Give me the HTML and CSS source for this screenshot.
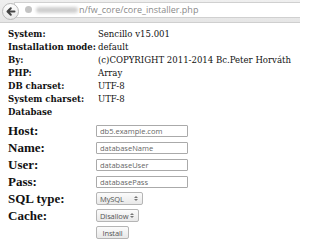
FILE: index.html
```html
<!DOCTYPE html>
<html>
<head>
<meta charset="utf-8">
<link rel="stylesheet" href="styles.css">
</head>
<body>
<div class="toolbar">
  <div class="back">
    <svg width="11" height="11" viewBox="0 0 11 11"><path d="M9.5 5.5H3M5.8 2.2L2.5 5.5l3.3 3.3" fill="none" stroke="#444" stroke-width="2" stroke-linecap="round" stroke-linejoin="round"/></svg>
  </div>
  <div class="urlbar">
    <span class="globe"></span>
    <span class="blur"></span>
    <span class="url">n/fw_core/core_installer.php</span>
  </div>
</div>
<div class="page">
  <table class="info">
    <tr><th>System:</th><td>Sencillo v15.001</td></tr>
    <tr><th>Installation mode:</th><td>default</td></tr>
    <tr><th>By:</th><td>(c)COPYRIGHT 2011-2014 Bc.Peter Horváth</td></tr>
    <tr><th>PHP:</th><td>Array</td></tr>
    <tr><th>DB charset:</th><td>UTF-8</td></tr>
    <tr><th>System charset:</th><td>UTF-8</td></tr>
    <tr><th>Database</th><td></td></tr>
  </table>
  <form class="db">
    <div class="row"><label>Host:</label><input class="field" value="db5.example.com"></div>
    <div class="row"><label>Name:</label><input class="field" value="databaseName"></div>
    <div class="row"><label>User:</label><input class="field" value="databaseUser"></div>
    <div class="row"><label>Pass:</label><input class="field" value="databasePass"></div>
    <div class="row"><label>SQL type:</label><span class="select sql">MySQL<i class="spin"></i></span></div>
    <div class="row"><label>Cache:</label><span class="select cache">Disallow<i class="spin"></i></span></div>
    <div class="row"><label></label><span class="btn">Install</span></div>
  </form>
</div>
</body>
</html>
```
FILE: styles.css
```css
html, body { margin: 0; padding: 0; background: #fff; }
body { width: 300px; height: 252px; overflow: hidden; }
.toolbar {
  height: 22px;
  background: linear-gradient(#efefef, #e6e6e6);
  border-bottom: 1px solid #cfcfcf;
  position: relative;
  display: flex;
  align-items: center;
}
.back {
  position: absolute; left: 2px; top: 3px;
  width: 15px; height: 15px; border-radius: 50%;
  border: 1px solid #b9b9b9;
  background: linear-gradient(#fdfdfd, #e9e9e9);
  display: flex; align-items: center; justify-content: center;
  z-index: 2;
}
.urlbar {
  margin-left: 14px; margin-top: -3px;
  flex: 1; height: 14px;
  background: #fff; border: 1px solid #d0d0d0; border-right: none;
  display: flex; align-items: center;
  font: 9px "Open Sans", "Liberation Sans", sans-serif; color: #8a8a8a;
}
.globe { width: 7px; height: 7px; border-radius: 50%; background: #c4c4c4; margin-left: 10px; }
.blur { width: 42px; height: 6px; background: #cfcfcf; margin-left: 4px; filter: blur(1.5px); border-radius: 3px; }
.url { margin-left: 1px; }
.page { padding: 4px 8px 0 8px; }
.info { border-collapse: collapse; font: 9.5px "DejaVu Serif Condensed", "DejaVu Serif", serif; color: #111; }
.info th { text-align: left; font-weight: bold; padding: 0 2px 0 0; height: 13px; white-space: nowrap; }
.info td { padding: 0; white-space: nowrap; }
.db { margin-top: 4px; font: bold 13px "Liberation Serif", serif; color: #111; }
.row { display: flex; align-items: center; height: 17px; }
.row label { width: 88px; flex: none; }
.field {
  box-sizing: border-box; width: 92px; height: 12px; margin: 0; padding: 0 3px;
  border: 1px solid #aaa; border-radius: 1px;
  font: 7.5px "Open Sans", "Liberation Sans", sans-serif; color: #666;
  outline: none;
}
.select, .btn {
  box-sizing: border-box; height: 13px; padding: 0 3px;
  border: 1px solid #b5b5b5; border-radius: 2px;
  background: linear-gradient(#fbfbfb, #e8e8e8);
  font: 7.5px "Open Sans", "Liberation Sans", sans-serif; font-weight: normal; color: #555;
  letter-spacing: -0.1px;
  display: flex; align-items: center; position: relative;
}
.sql { width: 47px; }
.cache { width: 43px; }
.btn { width: 33px; justify-content: center; }
.spin { position: absolute; right: 4px; top: 3px; width: 0; height: 0;
  border-left: 2px solid transparent; border-right: 2px solid transparent; border-bottom: 2px solid #777; }
.spin::after { content: ""; position: absolute; left: -2px; top: 3px;
  border-left: 2px solid transparent; border-right: 2px solid transparent; border-top: 2px solid #777; }
```
